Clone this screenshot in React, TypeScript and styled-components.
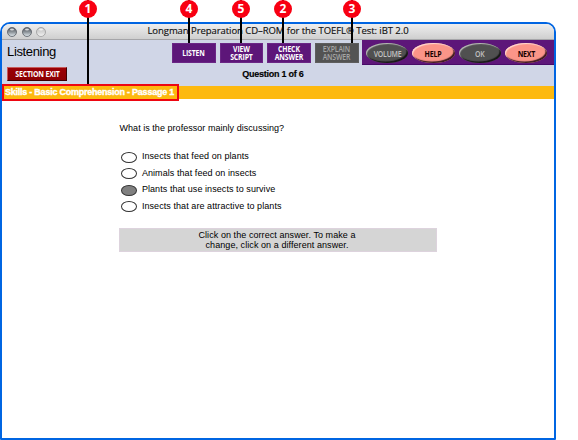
import React from "react";
import styled, { createGlobalStyle } from "styled-components";

const Global = createGlobalStyle`
  * { box-sizing: border-box; }
  body { margin: 0; background: #fff; overflow: hidden; }
`;

const sans = `"Liberation Sans", Arial, sans-serif`;
const humanist = `"Open Sans", "Noto Sans", sans-serif`;

const Stage = styled.div`
  position: relative;
  width: 578px;
  height: 440px;
  padding-top: 22px;
  font-family: ${sans};
  color: #000;
`;

const Window = styled.main`
  width: 556px;
  height: 418px;
  border: 2px solid #0065e2;
  border-radius: 10px 10px 1px 1px;
  overflow: hidden;
  background: #fff;
`;

const TitleBar = styled.header`
  display: grid;
  grid-template-columns: 46px 1fr 46px;
  align-items: center;
  height: 16px;
  border-bottom: 1px solid #a5a5a8;
  background: linear-gradient(#eeeeee, #cfcfcf);
`;

const Lights = styled.div`
  display: flex;
  gap: 4.5px;
  padding-left: 5px;
`;

const Title = styled.h1`
  margin: -2px 0 0;
  text-align: center;
  white-space: nowrap;
  font: 500 9.5px/14px ${humanist};
  letter-spacing: -0.06px;
  color: #111;
  -webkit-text-stroke: 0.15px #111;
`;

const Header = styled.section`
  display: flex;
  height: 46px;
  background: #d0d6e7;
`;

const SectionColumn = styled.div`
  width: 170px;
  padding: 3px 0 0 5px;
`;

const SectionName = styled.h2`
  margin: 0;
  font: 400 13px/17px ${sans};
  letter-spacing: -0.35px;
`;

const Condensed = styled.span`
  display: inline-block;
  transform: scaleX(0.84);
  white-space: pre;
`;

const ExitButton = styled.button`
  display: flex;
  align-items: center;
  justify-content: center;
  width: 60px;
  height: 14px;
  margin-top: 7px;
  padding: 0;
  border: 1px solid;
  border-color: #c65b5b #420000 #3c0000 #c85a5a;
  background: linear-gradient(#9b0005, #8d0003);
  color: #fff;
  font: 700 8.3px/10px ${humanist};
  letter-spacing: -0.2px;
  white-space: nowrap;
`;

const ToolColumn = styled.div`
  width: 190px;
  padding-top: 3px;
`;

const ToolRow = styled.div`
  display: grid;
  grid-template-columns: repeat(4, 43.5px);
  column-gap: 4.2px;
`;

const ToolButton = styled.button<{ $disabled?: boolean }>`
  display: flex;
  align-items: center;
  justify-content: center;
  height: 20px;
  padding: 0;
  border: 1px solid ${(p) => (p.$disabled ? "#5e5e5e" : "#6b2685")};
  background: ${(p) => (p.$disabled ? "#535353" : "#5d1679")};
  color: ${(p) => (p.$disabled ? "#a5a5a5" : "#fff")};
  font: ${(p) => (p.$disabled ? 600 : 700)} 8.2px/8px ${humanist};
  letter-spacing: -0.15px;
`;

const Question = styled.div`
  margin-top: 5px;
  padding-left: 12px;
  text-align: center;
  font: 700 9px/12px ${sans};
  letter-spacing: -0.25px;
  -webkit-text-stroke: 0.15px #000;
`;

const NavPanel = styled.nav`
  display: flex;
  gap: 4px;
  width: 192px;
  height: 25px;
  padding: 3px 0 0 4px;
  border-bottom: 1px solid #470a68;
  background: #5d1679;
`;

const OvalButton = styled.button<{ $active?: boolean }>`
  flex: 0 0 42.3px;
  height: 20px;
  padding: 0;
  border: 0;
  border-radius: 50%;
  background: ${(p) => (p.$active ? "#fb9588" : "#505050")};
  box-shadow:
    inset 1px 1px 1px ${(p) => (p.$active ? "#ffdbd3" : "#bcbcbc")},
    inset -1.5px -1.5px 1px ${(p) => (p.$active ? "#3c1920" : "#171717")};
  color: ${(p) => (p.$active ? "#180000" : "#c2c2c2")};
  font: ${(p) => (p.$active ? 700 : 600)} 8.3px/19px ${humanist};
  letter-spacing: -0.25px;
`;

const PassageBar = styled.div`
  height: 13px;
  padding-left: 3px;
  background: #fdb90f;
  color: #fff;
  font: 700 9px/13px ${sans};
  letter-spacing: -0.24px;
  -webkit-text-stroke: 0.35px #fff;
`;

const Content = styled.section`
  padding: 23px 0 0 117.5px;
  font-size: 9px;
`;

const Prompt = styled.p`
  margin: 0;
  font-size: 9px;
  line-height: 12px;
  letter-spacing: 0.04px;
`;

const Options = styled.ul`
  display: grid;
  grid-auto-rows: 16.6px;
  margin: 16px 0 0;
  padding: 0;
  list-style: none;
`;

const Option = styled.li`
  display: flex;
  gap: 4.9px;
  padding-left: 1.5px;
  line-height: 12px;
  letter-spacing: 0.07px;
`;

const Radio = styled.span<{ $checked?: boolean }>`
  width: 16px;
  height: 11px;
  margin-top: 1.5px;
  border: 1px solid #333;
  border-radius: 50%;
  background: ${(p) => (p.$checked ? "#808080" : "#fff")};
`;

const Hint = styled.p`
  width: 318px;
  height: 24px;
  margin: 11.6px 0 0 -0.5px;
  padding: 1px 2px 0 0;
  border: 1px solid #ddd3dd;
  background: #d5d5d5;
  text-align: center;
  line-height: 10px;
  letter-spacing: 0.07px;
`;

const Callout = styled.div<{ $x: number; $stem: number }>`
  position: absolute;
  top: 0;
  left: ${(p) => p.$x}px;
  width: 18px;
  height: ${(p) => p.$stem}px;
  background: linear-gradient(#000, #000) center top / 2px 100% no-repeat;
`;

const Badge = styled.span`
  display: block;
  width: 18px;
  height: 18px;
  border-radius: 50%;
  background: #f80012;
  color: #fff;
  text-align: center;
  font: 700 12px/17px ${humanist};
`;

const Highlight = styled.div`
  position: absolute;
  top: 84px;
  left: 2px;
  width: 177px;
  height: 17px;
  border: 2px solid #ee0712;
`;

const Light = ({ pale }: { pale?: boolean }) => (
  <svg width="10" height="10" viewBox="0 0 10 10">
    <defs>
      <linearGradient id={pale ? "pale" : "dark"} x2="0" y2="1">
        <stop stopColor={pale ? "#c2c2c2" : "#4d5259"} />
        <stop offset=".5" stopColor={pale ? "#d5d5d5" : "#8b9298"} />
        <stop offset="1" stopColor={pale ? "#f4f4f4" : "#e5edf2"} />
      </linearGradient>
    </defs>
    <circle cx="5" cy="5" r="4.5" fill={`url(#${pale ? "pale" : "dark"})`} stroke={pale ? "#999" : "#555b62"} strokeWidth=".8" />
    <ellipse cx="5" cy="2.5" rx="2" ry="1" fill="#fff" opacity=".75" />
  </svg>
);

const tools = ["LISTEN", "VIEW\nSCRIPT", "CHECK\nANSWER", "EXPLAIN\nANSWER"];
const nav = [
  { label: "VOLUME", active: false },
  { label: "HELP", active: true },
  { label: "OK", active: false },
  { label: "NEXT", active: true },
];
const options = [
  "Insects that feed on plants",
  "Animals that feed on insects",
  "Plants that use insects to survive",
  "Insects that are attractive to plants",
];
const callouts = [
  { n: 1, x: 79, stem: 84 },
  { n: 4, x: 180, stem: 43 },
  { n: 5, x: 232, stem: 43 },
  { n: 2, x: 274, stem: 43 },
  { n: 3, x: 343, stem: 43 },
];

export default function App() {
  return (
    <Stage>
      <Global />
      <Window>
        <TitleBar>
          <Lights><Light /><Light /><Light pale /></Lights>
          <Title>Longman Preparation CD–ROM for the TOEFL® Test: iBT 2.0</Title>
        </TitleBar>
        <Header>
          <SectionColumn>
            <SectionName>Listening</SectionName>
            <ExitButton><Condensed>SECTION EXIT</Condensed></ExitButton>
          </SectionColumn>
          <ToolColumn>
            <ToolRow>
              {tools.map((t, i) => (
                <ToolButton key={t} $disabled={i === 3}><Condensed>{t}</Condensed></ToolButton>
              ))}
            </ToolRow>
            <Question>Question 1 of 6</Question>
          </ToolColumn>
          <NavPanel>
            {nav.map((b) => (
              <OvalButton key={b.label} $active={b.active}><Condensed>{b.label}</Condensed></OvalButton>
            ))}
          </NavPanel>
        </Header>
        <PassageBar>Skills - Basic Comprehension - Passage 1</PassageBar>
        <Content>
          <Prompt>What is the professor mainly discussing?</Prompt>
          <Options>
            {options.map((o, i) => <Option key={o}><Radio $checked={i === 2} />{o}</Option>)}
          </Options>
          <Hint>Click on the correct answer. To make a<br />change, click on a different answer.</Hint>
        </Content>
      </Window>
      <Highlight />
      {callouts.map((c) => <Callout key={c.n} $x={c.x} $stem={c.stem}><Badge>{c.n}</Badge></Callout>)}
    </Stage>
  );
}
